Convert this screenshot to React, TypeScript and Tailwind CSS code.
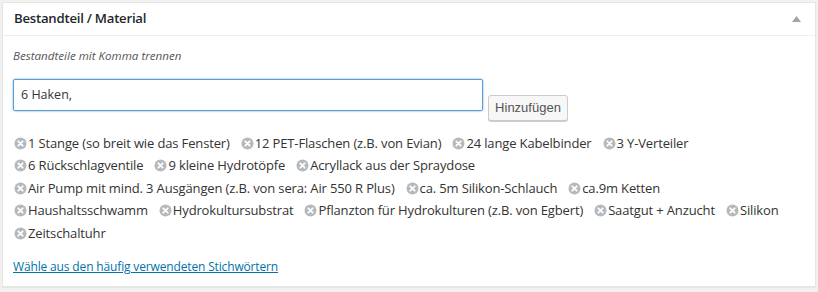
import React from "react";

const rows: string[][] = [
  ["1 Stange (so breit wie das Fenster)", "12 PET-Flaschen (z.B. von Evian)", "24 lange Kabelbinder", "3 Y-Verteiler"],
  ["6 Rückschlagventile", "9 kleine Hydrotöpfe", "Acryllack aus der Spraydose"],
  ["Air Pump mit mind. 3 Ausgängen (z.B. von sera: Air 550 R Plus)", "ca. 5m Silikon-Schlauch", "ca.9m Ketten"],
  ["Haushaltsschwamm", "Hydrokultursubstrat", "Pflanzton für Hydrokulturen (z.B. von Egbert)", "Saatgut + Anzucht", "Silikon"],
  ["Zeitschaltuhr"],
];

function XIcon() {
  return (
    <svg width="13" height="13" viewBox="0 0 13 13" className="shrink-0">
      <circle cx="6.5" cy="6.5" r="6" fill="#b4b9be" />
      <path d="M4.3 4.3 L8.7 8.7 M8.7 4.3 L4.3 8.7" stroke="#fff" strokeWidth="1.8" strokeLinecap="round" />
    </svg>
  );
}

export default function App() {
  const os = { fontFamily: '"Open Sans", sans-serif' };
  return (
    <div className="w-[818px] h-[292px] bg-[#f1f1f1] pt-[2px] pl-[2px]" style={os}>
      <div className="w-[814px] h-[285px] bg-white border border-[#e5e5e5] shadow-[0_1px_1px_rgba(0,0,0,0.04)] flex flex-col">
        <div className="h-[33px] border-b border-[#eeeeee] flex items-center justify-between pl-[11px] pr-[14px]">
          <span className="text-[13.2px] tracking-[-0.25px] font-semibold text-[#23282d]">Bestandteil / Material</span>
          <svg width="9" height="6" viewBox="0 0 9 6">
            <path d="M4.5 0 L9 6 L0 6 Z" fill="#a0a5aa" />
          </svg>
        </div>
        <div className="pl-[10px] pr-[12px] pt-[11px]">
          <div className="text-[11.6px] italic text-[#555] leading-[18px]">Bestandteile mit Komma trennen</div>
          <div className="flex items-start mt-[14px] gap-[5px]">
            <div className="w-[470px] h-[32px] border border-[#5b9dd9] rounded-[2px] shadow-[0_0_2px_rgba(30,140,190,0.8)] flex items-center pl-[7px] text-[12.5px] text-[#32373c]">
              6 Haken,
            </div>
            <div
              className="mt-[16px] w-[80px] h-[26px] border border-[#cccccc] bg-[#f7f7f7] rounded-[3px] shadow-[0_1px_0_#cccccc] flex items-center justify-center text-[13px] text-[#555]"
              style={{ fontFamily: '"Liberation Sans", Arial, sans-serif' }}
            >
              Hinzufügen
            </div>
          </div>
          <div className="mt-[11px] pl-[1px]">
            {rows.map((r, i) => (
              <div key={i} className="flex items-center h-[22.5px] whitespace-nowrap">
                {r.map((t, j) => (
                  <span key={j} className="inline-flex items-center gap-[1px] mr-[11px] text-[13px] tracking-[-0.14px] text-[#333]">
                    <XIcon />
                    <span>{t}</span>
                  </span>
                ))}
              </div>
            ))}
          </div>
          <div className="mt-[13px] text-[12px] tracking-[-0.15px] leading-[18px]">
            <a className="text-[#0073aa] underline">Wähle aus den häufig verwendeten Stichwörtern</a>
          </div>
        </div>
      </div>
    </div>
  );
}
